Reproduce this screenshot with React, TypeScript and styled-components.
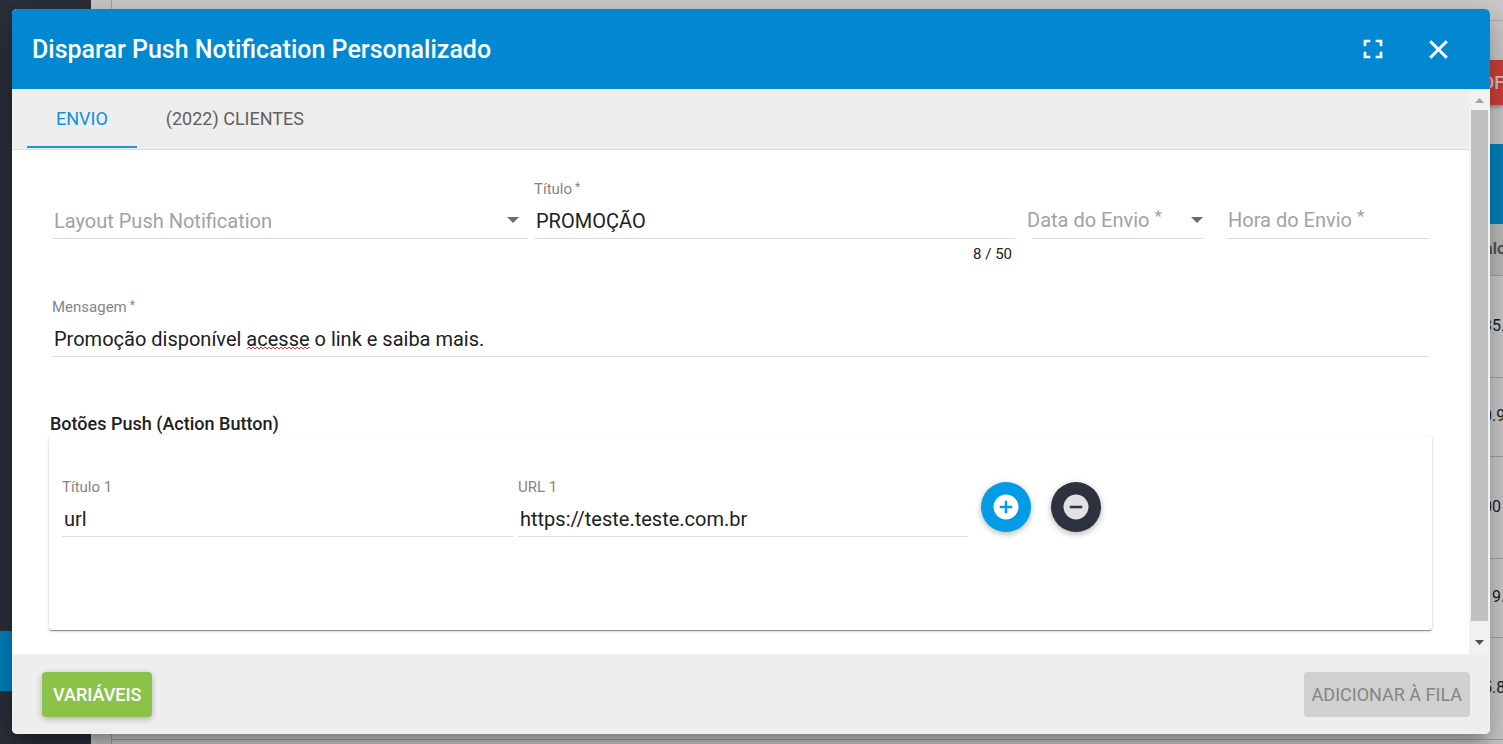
import React, { useState } from "react";
import styled, { createGlobalStyle, css } from "styled-components";

const GlobalStyle = createGlobalStyle`
  *, *::before, *::after { box-sizing: border-box; }
  html, body { margin: 0; }
  body {
    font-family: Roboto, "Liberation Sans", sans-serif;
    color: #212121;
    background: #c8c8c8;
  }
  button, input, select { font-family: inherit; }
`;

/* ---------- page behind the dialog ---------- */

const Page = styled.div`
  display: flex;
  min-height: 100vh;
  overflow: hidden;
`;

const Sidebar = styled.nav`
  flex: 0 0 91px;
  padding-top: 631px;
  background: #2b2f3a;
`;

const SidebarItem = styled.div`
  height: 60px;
  background: #0280bd;
`;

const Content = styled.main`
  flex: 1;
  min-width: 0;
  margin-left: 20px;
  border-left: 1px solid #a4a4a4;
  background: #cacaca;
`;

const TopLine = styled.div`
  height: 21px;
  border-bottom: 1px solid #acacac;
`;

const Actions = styled.div`
  display: flex;
  justify-content: flex-end;
  height: 123px;
  padding-top: 39px;
`;

const ExportButton = styled.button`
  width: 40px;
  height: 45px;
  padding: 0 0 0 8px;
  border: 0;
  overflow: hidden;
  text-align: left;
  white-space: nowrap;
  font-size: 18px;
  font-weight: 500;
  color: #d0c8c8;
  background: #cc3f36;
  box-shadow: 0 2px 4px rgba(0, 0, 0, 0.3);
`;

const TableBar = styled.div`
  height: 80px;
  background: #0280bd;
`;

const ValueTable = styled.table`
  width: 100%;
  border-collapse: collapse;
  table-layout: fixed;
  font-size: 16px;

  th, td {
    padding: 0 0 2px;
    overflow: hidden;
    text-align: left;
    white-space: nowrap;
    border-bottom: 1px solid #a2a2a2;
  }
  th {
    height: 51px;
    font-weight: 700;
    color: #555;
    background: #bcbcbc;
  }
  td:last-child { padding-left: 9px; }
  th:last-child, td:last-child { width: 29px; }
`;

const ValueRow = styled.tr<{ $tall?: boolean }>`
  height: ${(p) => (p.$tall ? 102 : 79)}px;
`;

/* ---------- dialog ---------- */

const Overlay = styled.div`
  position: absolute;
  inset: 0;
  padding: 9px 13px 10px 12px;
`;

const Dialog = styled.section`
  display: flex;
  flex-direction: column;
  min-height: 100%;
  border-radius: 5px;
  overflow: hidden;
  background: #fff;
  box-shadow: 0 10px 11px -6px rgba(0, 0, 0, 0.2),
    0 19px 28px 3px rgba(0, 0, 0, 0.14), 0 8px 35px 6px rgba(0, 0, 0, 0.12);
`;

const Header = styled.header`
  display: flex;
  align-items: center;
  height: 80px;
  padding: 0 36px 0 20px;
  color: #fff;
  background: #0288d1;
`;

const Title = styled.h2`
  flex: 1;
  margin: 0;
  padding-top: 2px;
  font-size: 25px;
  font-weight: 500;
  line-height: 32px;
`;

const HeaderButton = styled.button`
  display: grid;
  place-items: center;
  width: 32px;
  height: 32px;
  margin-left: 33px;
  padding: 0;
  border: 0;
  color: inherit;
  background: none;
`;

const Body = styled.div`
  display: flex;
  flex: 1;
`;

const Scroller = styled.div`
  flex: 1;
  min-width: 0;
`;

const ScrollBar = styled.div`
  display: flex;
  flex-direction: column;
  align-items: center;
  justify-content: space-between;
  width: 21px;
  padding: 9px 2px 9px 2px;
  background: #f1f1f1;
`;

const ScrollThumb = styled.div`
  flex: 1;
  width: 17px;
  margin: 7px 0 19px;
  background: #c1c1c1;
`;

const Tabs = styled.div`
  display: flex;
  height: 61px;
  padding: 0 15px 1px;
  border-bottom: 1px solid #dcdcdc;
  background: #eee;
`;

const Tab = styled.button<{ $active?: boolean }>`
  padding: 2px 29px 0;
  border: 0;
  border-bottom: 2px solid ${(p) => (p.$active ? "#1896d6" : "transparent")};
  font-size: 18px;
  font-weight: 400;
  color: ${(p) => (p.$active ? "#1090d8" : "#616161")};
  background: none;
`;

const Form = styled.form`
  padding: 28px 37px 24px;
`;

const TopFields = styled.div`
  display: grid;
  grid-template-columns: 476fr 481fr 182fr 220fr;
  column-gap: 6px;
  padding: 0 3px;
`;

const MessageRow = styled.div`
  padding: 32px 3px 55px;
`;

const Field = styled.div<{ $indent?: number }>`
  display: flex;
  flex-direction: column;
  min-width: 0;
  padding-left: ${(p) => p.$indent ?? 0}px;
`;

const FieldLabel = styled.label`
  height: 23px;
  font-size: 15px;
  line-height: 22px;
  color: #858585;
`;

const Star = styled.span<{ $large?: boolean }>`
  margin-left: ${(p) => (p.$large ? 5 : 3)}px;
  vertical-align: top;
  font-size: ${(p) => (p.$large ? 17 : 12)}px;
  line-height: ${(p) => (p.$large ? 16 : 18)}px;
`;

const Control = styled.div<{ $inset?: boolean }>`
  position: relative;
  display: grid;
  align-items: center;
  height: 38px;

  & > * { grid-area: 1 / 1; }

  &::after {
    content: "";
    grid-area: 1 / 1;
    align-self: end;
    height: 1px;
    margin-left: ${(p) => (p.$inset ? 5 : 0)}px;
    background: #dedede;
  }
`;

const inputLook = css`
  width: 100%;
  height: 38px;
  padding: 2px 2px 1px;
  border: 0;
  outline: 0;
  font-size: 20px;
  background: transparent;
`;

const Input = styled.input`
  ${inputLook}
  color: #212121;
`;

const Select = styled.select`
  ${inputLook}
  appearance: none;
  color: #a2a2a2;
`;

const FloatLabel = styled.label<{ $pad?: number }>`
  padding-left: ${(p) => p.$pad ?? 0}px;
  font-size: 20px;
  line-height: 24px;
  white-space: nowrap;
  color: #a2a2a2;
`;

const Arrow = styled.svg`
  justify-self: end;
  width: 12px;
  height: 6px;
  margin-right: 9px;
  fill: #6b6b6b;
  pointer-events: none;
`;

const ArrowButton = styled.button`
  justify-self: end;
  display: grid;
  place-items: center;
  width: 16px;
  height: 16px;
  padding: 0;
  border: 0;
  background: none;

  ${Arrow} { margin: 0; }
`;

const SpellMark = styled.svg`
  position: absolute;
  left: 195px;
  bottom: 7px;
  width: 63px;
  height: 4px;
`;

const Counter = styled.div`
  height: 25px;
  padding: 5px 3px 0 0;
  text-align: right;
  font-size: 15px;
  line-height: 20px;
`;

const CardTitle = styled.h3`
  margin: 0 1px;
  font-size: 18px;
  font-weight: 500;
  line-height: 24px;
`;

const Card = styled.div`
  display: grid;
  grid-template-columns: 451fr 450fr 446fr;
  column-gap: 5px;
  align-items: start;
  min-height: 194px;
  padding: 40px 13px;
  border-radius: 2px;
  box-shadow: 0 1px 3px rgba(0, 0, 0, 0.2), 0 1px 1px rgba(0, 0, 0, 0.2),
    0 2px 1px -1px rgba(0, 0, 0, 0.2);
`;

const RoundButtons = styled.div`
  display: flex;
  gap: 20px;
  padding: 6px 0 0 8px;
`;

const RoundButton = styled.button<{ $dark?: boolean }>`
  display: grid;
  place-items: center;
  width: 50px;
  height: 50px;
  padding: 0;
  border: 0;
  border-radius: 50%;
  color: ${(p) => (p.$dark ? "#e2e2e4" : "#fff")};
  background: ${(p) => (p.$dark ? "#2d323e" : "#039be5")};
  box-shadow: 0 2px 6px rgba(0, 0, 0, 0.3);
`;

const Footer = styled.footer`
  display: flex;
  align-items: center;
  justify-content: space-between;
  height: 80px;
  padding: 0 20px 0 30px;
  background: #eee;
`;

const FooterButton = styled.button`
  height: 45px;
  padding: 0 8px;
  border: 0;
  border-radius: 4px;
  font-size: 18px;
  font-weight: 400;
  color: #858585;
  background: #d0d0d0;
`;

const PrimaryButton = styled(FooterButton)`
  padding: 0 11px;
  font-weight: 500;
  color: #fff;
  background: #8bc34a;
  box-shadow: 0 2px 6px rgba(0, 0, 0, 0.26);
`;

/* ---------- icons ---------- */

const FullscreenIcon = () => (
  <svg width="32" height="32" viewBox="0 0 24 24" fill="currentColor" aria-hidden="true">
    <path d="M5 5h5v2H7v3H5zM14 5h5v5h-2V7h-3zM17 14h2v5h-5v-2h3zM10 17v2H5v-5h2v3z" />
  </svg>
);

const CloseIcon = () => (
  <svg width="31" height="31" viewBox="0 0 24 24" fill="currentColor" stroke="currentColor" strokeWidth="0.4" aria-hidden="true">
    <path d="M19 6.41 17.59 5 12 10.59 6.41 5 5 6.41 10.59 12 5 17.59 6.41 19 12 13.41 17.59 19 19 17.59 13.41 12z" />
  </svg>
);

const CircleIcon = ({ plus }: { plus?: boolean }) => (
  <svg width="30" height="30" viewBox="0 0 24 24" fill="currentColor" aria-hidden="true">
    <path
      d={
        plus
          ? "M17 13h-4v4h-2v-4H7v-2h4V7h2v4h4m-5-9A10 10 0 0 0 2 12a10 10 0 0 0 10 10 10 10 0 0 0 10-10A10 10 0 0 0 12 2z"
          : "M17 13H7v-2h10m-5-9A10 10 0 0 0 2 12a10 10 0 0 0 10 10 10 10 0 0 0 10-10A10 10 0 0 0 12 2z"
      }
    />
  </svg>
);

const DownArrow = () => (
  <Arrow viewBox="0 0 12 6" aria-hidden="true">
    <path d="M0 0h12L6 6z" />
  </Arrow>
);

/* ---------- parts ---------- */

type TextFieldProps = {
  id: string;
  label: string;
  value: string;
  required?: boolean;
  onChange: (value: string) => void;
  children?: React.ReactNode;
};

const TextField = ({ id, label, value, required, onChange, children }: TextFieldProps) => (
  <>
    <FieldLabel htmlFor={id}>
      {label}
      {required && <Star>*</Star>}
    </FieldLabel>
    <Control>
      <Input id={id} value={value} onChange={(e) => onChange(e.target.value)} />
      {children}
    </Control>
  </>
);

const rows = [
  { value: "35.", tall: true },
  { value: "0.9" },
  { value: "00", tall: true },
  { value: "19." },
  { value: "5.8", tall: true },
];

const wave =
  "M0 3" + Array.from({ length: 16 }, () => "l2-2 2 2").join("");

export default function App() {
  const [title, setTitle] = useState("PROMOÇÃO");
  const [message, setMessage] = useState("Promoção disponível acesse o link e saiba mais.");
  const [buttonTitle, setButtonTitle] = useState("url");
  const [buttonUrl, setButtonUrl] = useState("https://teste.teste.com.br");

  return (
    <>
      <GlobalStyle />
      <Page aria-hidden="true">
        <Sidebar>
          <SidebarItem />
        </Sidebar>
        <Content>
          <TopLine />
          <Actions>
            <ExportButton tabIndex={-1}>PDF</ExportButton>
          </Actions>
          <TableBar />
          <ValueTable>
            <thead>
              <tr>
                <th />
                <th>Valor</th>
              </tr>
            </thead>
            <tbody>
              {rows.map((row) => (
                <ValueRow key={row.value} $tall={row.tall}>
                  <td />
                  <td>{row.value}</td>
                </ValueRow>
              ))}
            </tbody>
          </ValueTable>
        </Content>
      </Page>

      <Overlay>
        <Dialog role="dialog" aria-labelledby="dialog-title">
          <Header>
            <Title id="dialog-title">Disparar Push Notification Personalizado</Title>
            <HeaderButton aria-label="Tela cheia">
              <FullscreenIcon />
            </HeaderButton>
            <HeaderButton aria-label="Fechar">
              <CloseIcon />
            </HeaderButton>
          </Header>

          <Body>
            <Scroller>
              <Tabs role="tablist">
                <Tab role="tab" aria-selected="true" $active>
                  ENVIO
                </Tab>
                <Tab role="tab" aria-selected="false">
                  (2022) CLIENTES
                </Tab>
              </Tabs>

              <Form>
                <TopFields>
                  <Field>
                    <FieldLabel as="div" />
                    <Control>
                      <Select aria-label="Layout Push Notification">
                        <option>Layout Push Notification</option>
                      </Select>
                      <DownArrow />
                    </Control>
                  </Field>
                  <Field>
                    <TextField id="title" label="Título" required value={title} onChange={setTitle} />
                    <Counter>{title.length} / 50</Counter>
                  </Field>
                  <Field $indent={6}>
                    <FieldLabel as="div" />
                    <Control $inset>
                      <FloatLabel htmlFor="date">
                        Data do Envio<Star $large>*</Star>
                      </FloatLabel>
                      <Input id="date" />
                      <ArrowButton type="button" aria-label="Abrir calendário">
                        <DownArrow />
                      </ArrowButton>
                    </Control>
                  </Field>
                  <Field $indent={18}>
                    <FieldLabel as="div" />
                    <Control>
                      <FloatLabel htmlFor="time" $pad={1}>
                        Hora do Envio<Star $large>*</Star>
                      </FloatLabel>
                      <Input id="time" />
                    </Control>
                  </Field>
                </TopFields>

                <MessageRow>
                  <Field>
                    <TextField id="message" label="Mensagem" required value={message} onChange={setMessage}>
                      <SpellMark viewBox="0 0 63 4" fill="none" stroke="#e53935" aria-hidden="true">
                        <path d={wave} />
                      </SpellMark>
                    </TextField>
                  </Field>
                </MessageRow>

                <CardTitle>Botões Push (Action Button)</CardTitle>
                <Card>
                  <Field>
                    <TextField id="button-title" label="Título 1" value={buttonTitle} onChange={setButtonTitle} />
                  </Field>
                  <Field>
                    <TextField id="button-url" label="URL 1" value={buttonUrl} onChange={setButtonUrl} />
                  </Field>
                  <RoundButtons>
                    <RoundButton type="button" aria-label="Adicionar botão">
                      <CircleIcon plus />
                    </RoundButton>
                    <RoundButton type="button" aria-label="Remover botão" $dark>
                      <CircleIcon />
                    </RoundButton>
                  </RoundButtons>
                </Card>
              </Form>
            </Scroller>

            <ScrollBar aria-hidden="true">
              <svg width="9" height="5" viewBox="0 0 9 5" fill="#a3a3a3">
                <path d="M0 5h9L4.500 0z" />
              </svg>
              <ScrollThumb />
              <svg width="9" height="5" viewBox="0 0 9 5" fill="#505050">
                <path d="M0 0h9L4.500 5z" />
              </svg>
            </ScrollBar>
          </Body>

          <Footer>
            <PrimaryButton>VARIÁVEIS</PrimaryButton>
            <FooterButton disabled>ADICIONAR À FILA</FooterButton>
          </Footer>
        </Dialog>
      </Overlay>
    </>
  );
}
